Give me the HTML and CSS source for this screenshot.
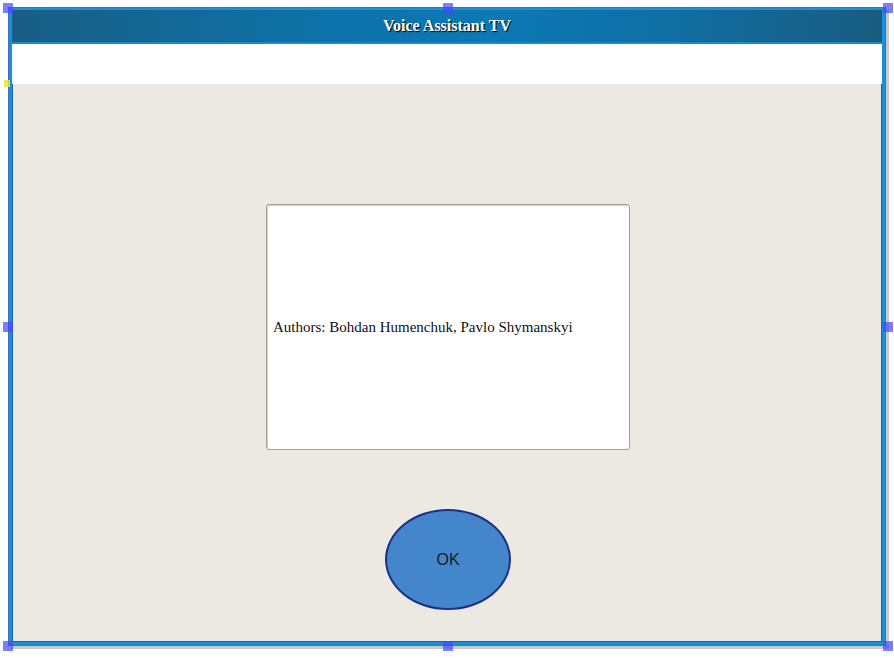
FILE: index.html
```html
<!DOCTYPE html>
<html>
<head>
<meta charset="utf-8">
<link rel="stylesheet" href="styles.css">
</head>
<body>
<div class="stage">
  <div class="window">
    <div class="header"><span class="title">Voice Assistant TV</span></div>
    <div class="strip"></div>
    <div class="content">
      <div class="dialog"><span class="authors">Authors: Bohdan Humenchuk, Pavlo Shymanskyi</span></div>
      <div class="ok">OK</div>
    </div>
  </div>
  <div class="handle h-tl"></div>
  <div class="handle h-tm"></div>
  <div class="handle h-tr"></div>
  <div class="handle h-ml"></div>
  <div class="handle h-mr"></div>
  <div class="handle h-bl"></div>
  <div class="handle h-bm"></div>
  <div class="handle h-br"></div>
  <div class="marker"></div>
</div>
</body>
</html>
```
FILE: styles.css
```css
html, body {
  margin: 0;
  padding: 0;
  background: #ffffff;
}
.stage {
  position: relative;
  width: 894px;
  height: 658px;
}
.window {
  position: relative;
  top: 8px;
  left: 9px;
  width: 876px;
  height: 637px;
  box-sizing: border-box;
  border-style: solid;
  border-color: #1c8fd8;
  border-width: 2px 3px 3px 3px;
  box-shadow: inset 0 0 0 1px #1565a8, 0 0 0 1px #3d6fc8, 3px 3px 0 1px #c9c9c9;
  display: flex;
  flex-direction: column;
  background: #ece9e2;
}
.header {
  height: 32px;
  flex: none;
  background: linear-gradient(to right, #185e84 0%, #0d72a8 35%, #0b79b6 55%, #0f6fa4 75%, #195c80 100%);
  border-bottom: 2px solid #1a8ad0;
  display: flex;
  align-items: center;
  justify-content: center;
}
.title {
  font-family: "Liberation Serif", "Times New Roman", serif;
  font-weight: bold;
  font-size: 16px;
  color: #ffffff;
  text-shadow: 1px 1px 1px #000000;
}
.strip {
  height: 40px;
  flex: none;
  background: #ffffff;
}
.content {
  flex: 1;
  display: flex;
  flex-direction: column;
  align-items: center;
  padding-top: 120px;
  padding-left: 2px;
}
.dialog {
  width: 364px;
  height: 246px;
  box-sizing: border-box;
  background: #ffffff;
  border: 1px solid #a8a090;
  border-radius: 3px;
  box-shadow: inset 1px 1px 0 #d6d2c8;
  display: flex;
  align-items: center;
  padding-left: 6px;
}
.authors {
  font-family: "Liberation Serif", "Times New Roman", serif;
  font-size: 15px;
  color: #111111;
}
.ok {
  margin-top: 59px;
  width: 126px;
  height: 101px;
  box-sizing: border-box;
  border: 2px solid #1c2f84;
  border-radius: 50%;
  background: #4486cc;
  display: flex;
  align-items: center;
  justify-content: center;
  font-family: "Liberation Sans", Arial, sans-serif;
  font-size: 16px;
  color: #141a2a;
}
.handle {
  position: absolute;
  width: 10px;
  height: 10px;
  background: rgba(70, 70, 255, 0.7);
}
.h-tl { left: 3px; top: 3px; }
.h-tm { left: 443px; top: 3px; }
.h-tr { left: 883px; top: 3px; }
.h-ml { left: 3px; top: 322px; }
.h-mr { left: 883px; top: 322px; }
.h-bl { left: 3px; top: 641px; }
.h-bm { left: 443px; top: 641px; }
.h-br { left: 883px; top: 641px; }
.marker {
  position: absolute;
  left: 4px;
  top: 80px;
  width: 6px;
  height: 7px;
  background: rgba(230, 230, 60, 0.85);
}
```
